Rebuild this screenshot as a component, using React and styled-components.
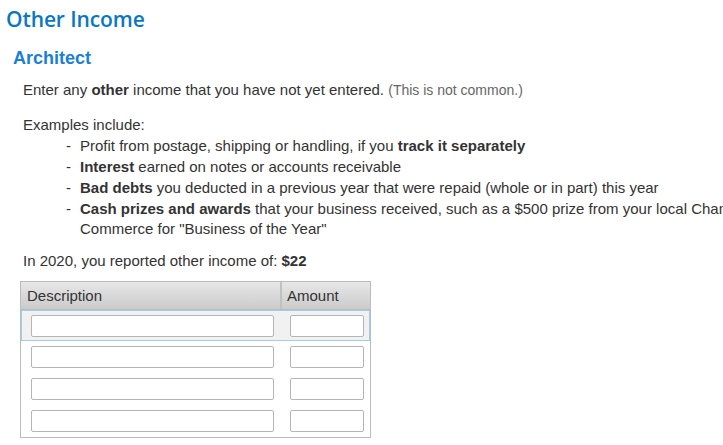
import React from "react"
import styled, { createGlobalStyle } from "styled-components"

const Global = createGlobalStyle`
  body {
    margin: 0;
    background: #fff;
    font-family: "Liberation Sans", Arial, sans-serif;
    color: #333;
  }
`

const Page = styled.div`
  padding: 5px 0 0 6px;
  width: 717px;
  overflow: hidden;
  white-space: nowrap;
`
const Title = styled.h1`
  margin: 0;
  font-family: "Open Sans", sans-serif;
  font-weight: 600;
  font-size: 21px;
  line-height: 28px;
  color: #0b77c3;
  letter-spacing: -0.1px;
`
const Section = styled.div`
  padding: 14px 0 0 7px;
`
const Heading = styled.h2`
  margin: 0;
  font-size: 18px;
  line-height: 22px;
  font-weight: bold;
  color: #1b7fd6;
`
const Body = styled.div`
  padding: 10px 0 0 10px;
  font-size: 15px;
  line-height: 21px;
`
const Para = styled.p`
  margin: 0 0 ${p => p.gap ?? 14}px;
`
const Muted = styled.span`
  font-size: 14px;
  color: #666;
`
const List = styled.ul`
  list-style: none;
  margin: 0 0 11px;
  padding: 0 0 0 43px;
`
const Item = styled.li`
  display: flex;
  line-height: 21px;
  &::before {
    content: "-";
    width: 14px;
    flex: none;
  }
`
const Wrap = styled.span`
  flex: none;
  white-space: normal;
  width: 720px;
  line-height: 20px;
  margin-top: 1px;
`
const Table = styled.div`
  width: 349px;
  margin-left: -3px;
  border: 1px solid #b9bbbd;
`
const HeadRow = styled.div`
  display: grid;
  grid-template-columns: 259px 1fr;
  background: linear-gradient(#e7e7e7, #cbcbcb);
  border-bottom: 1px solid #b9bbbd;
  height: 27px;
`
const HeadCell = styled.div`
  padding-left: 6px;
  line-height: 27px;
  font-size: 15px;
  color: #333;
  & + & {
    border-left: 2px solid #bfc1c3;
    padding-left: 5px;
  }
`
const Row = styled.div`
  box-sizing: border-box;
  display: grid;
  grid-template-columns: 258px 1fr;
  align-items: center;
  height: ${p => (p.active ? 31 : 32)}px;
  background: ${p => (p.active ? "#f1f1f1" : "#fff")};
  border: 1px solid ${p => (p.active ? "#a3cdef" : "transparent")};
`
const Cell = styled.div`
  display: flex;
  justify-content: ${p => (p.right ? "flex-end" : "flex-start")};
  padding: 0 ${p => (p.right ? 5 : 0)}px 0 ${p => (p.right ? 0 : 9)}px;
`
const Input = styled.input`
  box-sizing: border-box;
  width: ${p => p.w}px;
  height: 22px;
  border: 1px solid #b5b5b5;
  border-radius: 2px;
  background: #fff;
  outline: none;
  padding: 0 4px;
  font: inherit;
`

const rows = [0, 1, 2, 3]

export default function App() {
  return (
    <>
      <Global />
      <Page>
        <Title>Other Income</Title>
        <Section>
          <Heading>Architect</Heading>
          <Body>
            <Para gap={13}>
              Enter any <b>other</b> income that you have not yet entered. <Muted>(This is not common.)</Muted>
            </Para>
            <Para gap={0}>Examples include:</Para>
            <List>
              <Item>
                <span>Profit from postage, shipping or handling, if you <b>track it separately</b></span>
              </Item>
              <Item>
                <span><b>Interest</b> earned on notes or accounts receivable</span>
              </Item>
              <Item>
                <span><b>Bad debts</b> you deducted in a previous year that were repaid (whole or in part) this year</span>
              </Item>
              <Item>
                <Wrap>
                  <b>Cash prizes and awards</b> that your business received, such as a $500 prize from your local Chamber of Commerce for "Business of the Year"
                </Wrap>
              </Item>
            </List>
            <Para gap={10}>
              In 2020, you reported other income of: <b>$22</b>
            </Para>
            <Table>
              <HeadRow>
                <HeadCell>Description</HeadCell>
                <HeadCell>Amount</HeadCell>
              </HeadRow>
              {rows.map(i => (
                <Row key={i} active={i === 0}>
                  <Cell>
                    <Input w={243} aria-label="Description" />
                  </Cell>
                  <Cell right>
                    <Input w={74} aria-label="Amount" />
                  </Cell>
                </Row>
              ))}
            </Table>
          </Body>
        </Section>
      </Page>
    </>
  )
}
